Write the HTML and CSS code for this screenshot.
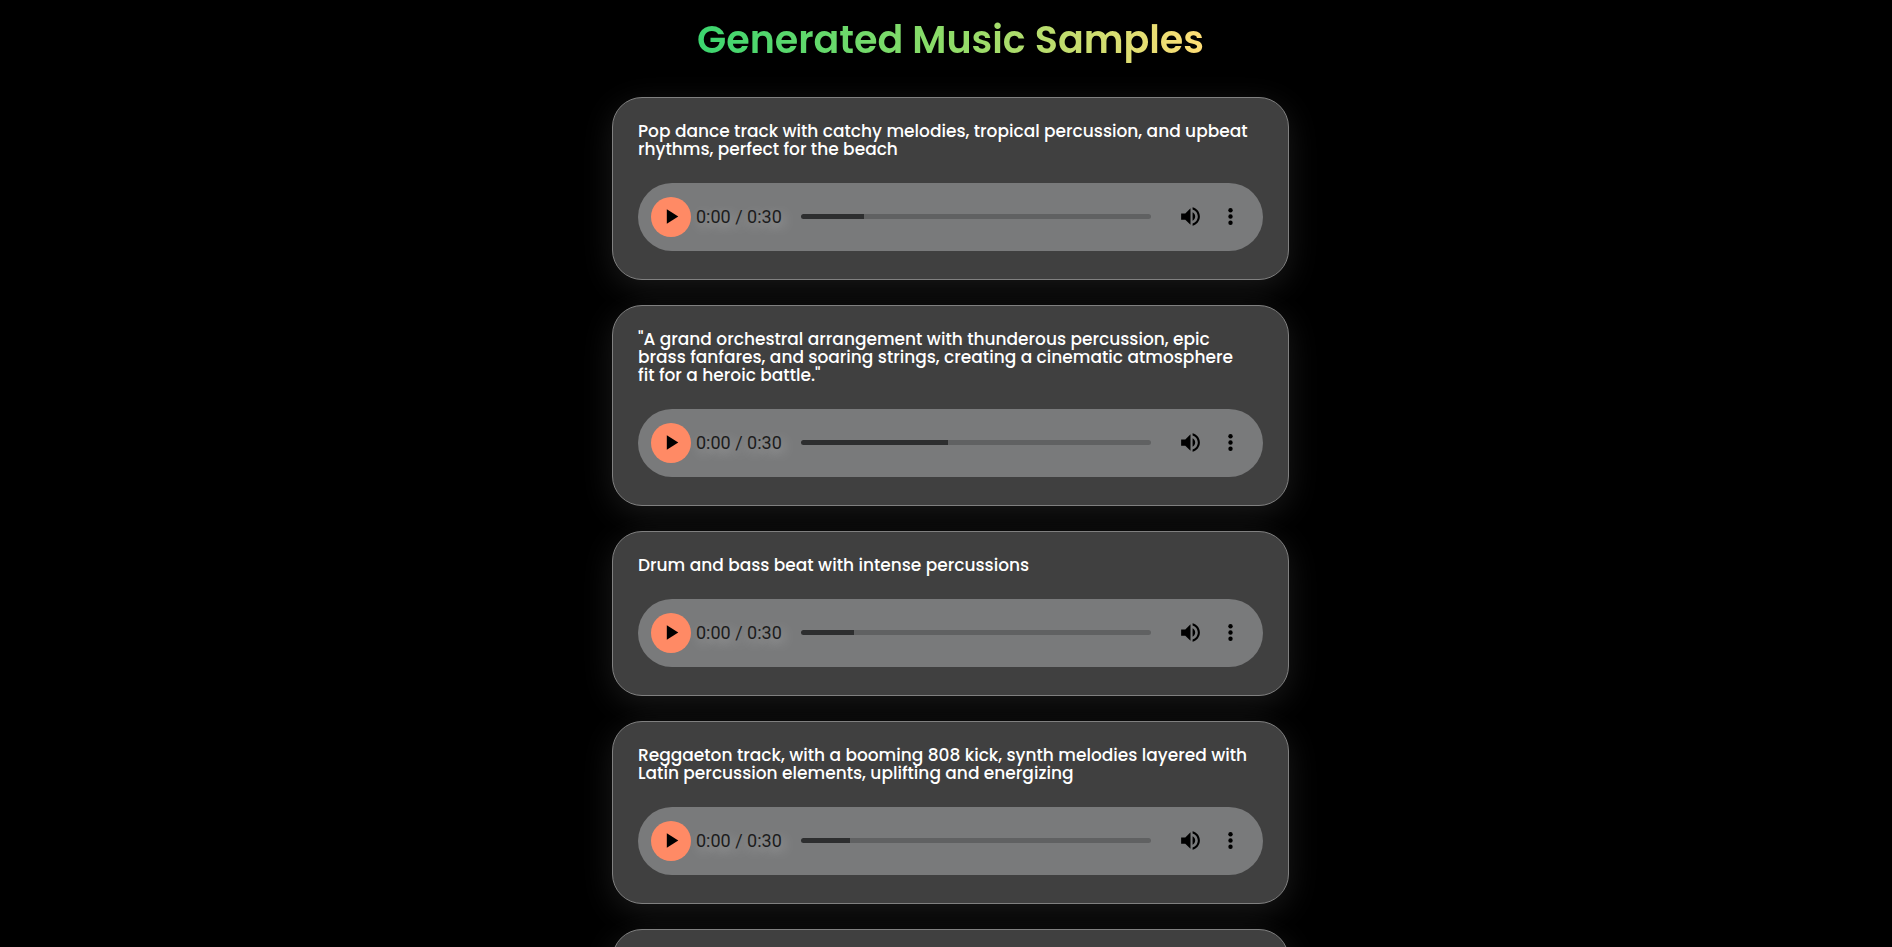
FILE: index.html
```html
<!DOCTYPE html>
<html lang="en">
<head>
<meta charset="utf-8">
<meta name="viewport" content="width=device-width, initial-scale=1">
<title>Generated Music Samples</title>
<link rel="stylesheet" href="styles.css">
</head>
<body>
<svg class="sprite" aria-hidden="true">
  <symbol id="play" viewBox="0 0 24 24"><path d="M7.500 5v14l11-7z"/></symbol>
  <symbol id="volume" viewBox="0 0 24 24"><path d="M3 9v6h4l5 5V4L7 9H3zm13.500 3c0-1.770-1.020-3.290-2.500-4.030v8.050c1.480-.730 2.500-2.250 2.500-4.020zM14 3.230v2.060c2.890.860 5 3.540 5 6.710s-2.110 5.850-5 6.710v2.060c4.010-.910 7-4.490 7-8.770s-2.990-7.860-7-8.770z"/></symbol>
  <symbol id="more" viewBox="0 0 24 24"><circle cx="12" cy="6" r="2.100"/><circle cx="12" cy="12" r="2.100"/><circle cx="12" cy="18" r="2.100"/></symbol>
</svg>
<main class="page">
  <h1 class="title">Generated Music Samples</h1>

  <article class="card">
    <p class="prompt">Pop dance track with catchy melodies, tropical percussion, and upbeat<br>rhythms, perfect for the beach</p>
    <div class="player">
      <button class="play" type="button" aria-label="Play"><svg class="icon"><use href="#play"/></svg></button>
      <span class="time">0:00 / 0:30</span>
      <input class="seek" type="range" min="0" max="30" value="0" aria-label="Seek" style="--loaded: 18%">
      <button class="control" type="button" aria-label="Mute"><svg class="icon"><use href="#volume"/></svg></button>
      <button class="control" type="button" aria-label="More options"><svg class="icon"><use href="#more"/></svg></button>
    </div>
  </article>

  <article class="card">
    <p class="prompt">"A grand orchestral arrangement with thunderous percussion, epic<br>brass fanfares, and soaring strings, creating a cinematic atmosphere<br>fit for a heroic battle."</p>
    <div class="player">
      <button class="play" type="button" aria-label="Play"><svg class="icon"><use href="#play"/></svg></button>
      <span class="time">0:00 / 0:30</span>
      <input class="seek" type="range" min="0" max="30" value="0" aria-label="Seek" style="--loaded: 42%">
      <button class="control" type="button" aria-label="Mute"><svg class="icon"><use href="#volume"/></svg></button>
      <button class="control" type="button" aria-label="More options"><svg class="icon"><use href="#more"/></svg></button>
    </div>
  </article>

  <article class="card">
    <p class="prompt">Drum and bass beat with intense percussions</p>
    <div class="player">
      <button class="play" type="button" aria-label="Play"><svg class="icon"><use href="#play"/></svg></button>
      <span class="time">0:00 / 0:30</span>
      <input class="seek" type="range" min="0" max="30" value="0" aria-label="Seek" style="--loaded: 15%">
      <button class="control" type="button" aria-label="Mute"><svg class="icon"><use href="#volume"/></svg></button>
      <button class="control" type="button" aria-label="More options"><svg class="icon"><use href="#more"/></svg></button>
    </div>
  </article>

  <article class="card">
    <p class="prompt">Reggaeton track, with a booming 808 kick, synth melodies layered with<br>Latin percussion elements, uplifting and energizing</p>
    <div class="player">
      <button class="play" type="button" aria-label="Play"><svg class="icon"><use href="#play"/></svg></button>
      <span class="time">0:00 / 0:30</span>
      <input class="seek" type="range" min="0" max="30" value="0" aria-label="Seek" style="--loaded: 14%">
      <button class="control" type="button" aria-label="Mute"><svg class="icon"><use href="#volume"/></svg></button>
      <button class="control" type="button" aria-label="More options"><svg class="icon"><use href="#more"/></svg></button>
    </div>
  </article>

  <article class="card card-next"></article>
</main>
</body>
</html>
```
FILE: styles.css
```css
* {
  box-sizing: border-box;
}

body {
  margin: 0;
  height: 100vh;
  overflow: hidden;
  background: #000;
  color: #fff;
  font-family: Poppins, Inter, sans-serif;
}

.sprite {
  display: none;
}

.page {
  display: flex;
  flex-direction: column;
  align-items: center;
  gap: 25px;
  padding: 16px 0 25px 9px;
}

.title {
  margin: 0 0 8px;
  font-size: 38px;
  font-weight: 600;
  line-height: 48px;
  color: transparent;
  background: linear-gradient(90deg, #3bd56f, #8fdc68 50%, #ffde76);
  -webkit-background-clip: text;
  background-clip: text;
}

.card {
  width: 100%;
  max-width: 677px;
  padding: 24px 25px 28px;
  border: 1px solid #808080;
  border-radius: 30px;
  background: #404040;
  box-shadow: 0 8px 32px rgba(255, 255, 255, 0.1);
}

.card-next {
  min-height: 165px;
}

.prompt {
  margin: 0 0 25px;
  font-size: 17px;
  font-weight: 500;
  line-height: 18px;
}

.player {
  display: flex;
  align-items: center;
  height: 68px;
  padding: 0 13px 1px;
  border-radius: 34px;
  background: #797a7b;
}

.play,
.control {
  display: flex;
  flex: none;
  align-items: center;
  justify-content: center;
  width: 40px;
  height: 40px;
  padding: 0;
  border: 0;
  border-radius: 50%;
  background: none;
  color: #000;
}

.play {
  background: #ff8a65;
}

.icon {
  width: 25px;
  height: 25px;
  fill: currentColor;
}

.time {
  flex: none;
  margin-left: 5px;
  color: #1c1c1c;
  font-family: Roboto, sans-serif;
  font-size: 18px;
  line-height: 24px;
  text-shadow: 3px 4px 12px rgba(255, 255, 255, 0.4);
}

.seek {
  flex: 1;
  min-width: 0;
  height: 19px;
  margin: 0 19px;
  appearance: none;
  background: none;
}

.seek::-webkit-slider-runnable-track {
  height: 5px;
  border-radius: 3px;
  background: linear-gradient(90deg, #2d2e2f var(--loaded), #606162 var(--loaded));
}

.seek::-webkit-slider-thumb {
  appearance: none;
  width: 5px;
  height: 5px;
  background: none;
}
```
